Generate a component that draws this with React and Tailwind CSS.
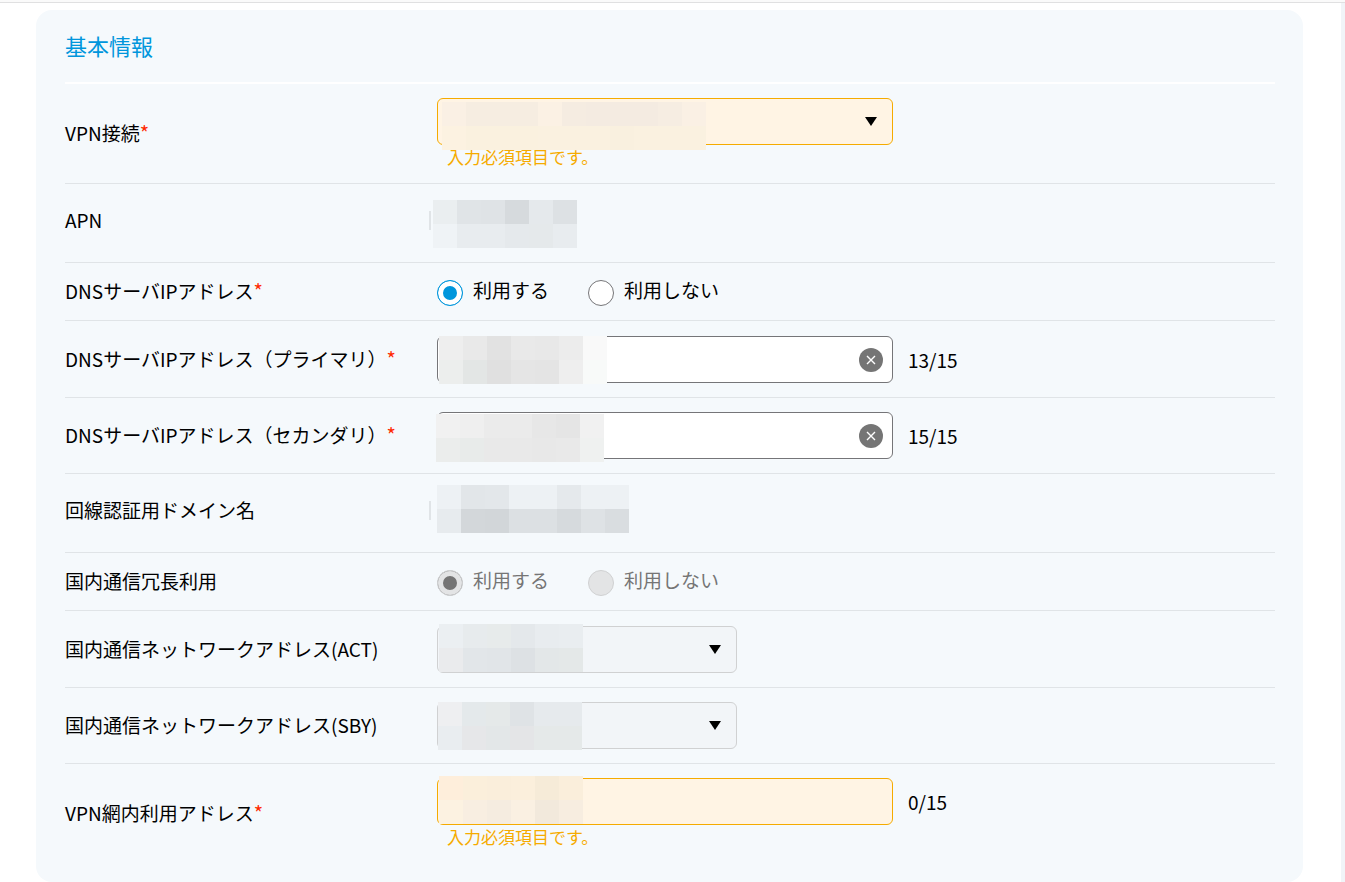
import React from 'react'
import clsx from 'clsx'

const CELL = 24

const MASKS = {
  vpn: [
    ['#faf0e4', '#f6ede1', '#f6ede1', '#f6ede1', '#fbf1e4', '#f5ece1', '#f4ebe1', '#f4ebe1', '#f4ebe1', '#f6ede2', '#faf0e4'],
    ['#fcf2e1', '#faf1df', '#faf1df', '#faf1df', '#faf1e0', '#faf1e0', '#faf1e0', '#f9f0df', '#faf1e0', '#faf1e0', '#faf1e0'],
  ],
  apn: [
    ['#eaeef0', '#e0e4e7', '#dfe3e6', '#d6dadd', '#e5e9ec', '#dde1e4'],
    ['#eff3f6', '#e8ecef', '#e8ecef', '#e5e9ec', '#e5e9eb', '#e8ecef'],
  ],
  primary: [
    ['#eeeeee', '#e9e9e9', '#e2e2e2', '#e9e9e9', '#e8e8e8', '#ececec', '#f9f9f9'],
    ['#eceeed', '#e3e6e5', '#e0e0e0', '#e5e5e5', '#e4e4e4', '#eeeeee', '#f8faf9'],
  ],
  secondary: [
    ['#f1f1f1', '#efefef', '#ebebeb', '#ebebeb', '#e7e7e7', '#e5e5e5', '#f1f1f1'],
    ['#ebedec', '#e8ebea', '#e9e9e9', '#e9e9e9', '#e8e8e8', '#e9e9e9', '#eff1f0'],
  ],
  domain: [
    ['#edf1f4', '#e2e6e9', '#e3e7ea', '#edf1f4', '#edf1f4', '#e5e9ec', '#edf1f4', '#edf1f4'],
    ['#e7ebee', '#d3d7da', '#d2d6d9', '#dce0e3', '#dce0e3', '#d6dadd', '#dee2e5', '#d9dde0'],
  ],
  act: [
    ['#ebeff2', '#e7ebed', '#e7ebeb', '#e4e8eb', '#e8ecef', '#e9edf0'],
    ['#eaebed', '#e2e6e9', '#e1e5e8', '#dde1e4', '#e3e7e8', '#e4e8e8'],
  ],
  sby: [
    ['#eeeff1', '#e4e9eb', '#e5e9e9', '#dfe3e6', '#e6eaed', '#e6eaed'],
    ['#e9edf0', '#e6e7e9', '#e3e7e8', '#e4e5e7', '#e5e9e9', '#e5e9e9'],
  ],
  address: [
    ['#feeedb', '#fbefdb', '#faeedb', '#fbefdc', '#f6ebd8', '#faeedb'],
    ['#fcf2e1', '#f8eee1', '#f5ece0', '#faf0e2', '#f2e9dc', '#f7ede0'],
  ],
}

// Pixelated cover for confidential values
function Mask({ name, className }) {
  const rows = MASKS[name]
  const width = rows[0].length * CELL
  const height = rows.length * CELL
  return (
    <svg
      aria-hidden="true"
      className={clsx('pointer-events-none absolute max-w-none', className)}
      width={width}
      height={height}
      shapeRendering="crispEdges"
    >
      {rows.map((row, y) =>
        row.map((fill, x) => (
          <rect key={`${x}-${y}`} x={x * CELL} y={y * CELL} width={CELL} height={CELL} fill={fill} />
        ))
      )}
    </svg>
  )
}

function Label({ htmlFor, id, required, children }) {
  const Tag = htmlFor ? 'label' : 'span'
  return (
    <Tag htmlFor={htmlFor} id={id} className="w-[372px] shrink-0 pb-0.5">
      {children}
      {required && <span className="text-xl leading-none text-[#ff2a00]">*</span>}
    </Tag>
  )
}

function Row({ last, className, children }) {
  return (
    <div className={clsx('flex items-center', !last && 'border-b border-[#e0e4e7]', className)}>
      {children}
    </div>
  )
}

function SelectBox({ id, error, disabled, className, children }) {
  return (
    <div className={clsx('relative max-w-full', className)}>
      <select
        id={id}
        disabled={disabled}
        aria-invalid={error || undefined}
        className={clsx(
          'block h-[47px] w-full appearance-none rounded-md border px-3 pr-10 outline-none',
          error && 'border-[#f5ab00] bg-[#fff4e4]',
          disabled && 'border-[#d0d1d2] bg-[#f2f5f8] opacity-100'
        )}
      >
        <option value="" />
      </select>
      <svg className="pointer-events-none absolute top-[19px] right-4" width="12" height="9" viewBox="0 0 12 9">
        <path d="M0 0h12L6 9z" fill="#000" />
      </svg>
      {children}
    </div>
  )
}

function TextBox({ id, error, clearable, children }) {
  return (
    <div className="relative w-[456px] max-w-full">
      <input
        id={id}
        type="text"
        aria-invalid={error || undefined}
        className={clsx(
          'block h-[47px] w-full rounded-md border px-3 pr-12 outline-none',
          error ? 'border-[#f5ab00] bg-[#fff4e4]' : 'border-[#757578] bg-white'
        )}
      />
      {clearable && (
        <button
          type="button"
          aria-label="クリア"
          className="absolute top-[12px] right-[10px] flex size-6 items-center justify-center rounded-full bg-[#757575]"
        >
          <svg width="10" height="10" viewBox="0 0 10 10" stroke="#fff" strokeWidth="1.4">
            <path d="M1 1l8 8M9 1L1 9" />
          </svg>
        </button>
      )}
      {children}
    </div>
  )
}

function RadioGroup({ name, labelledBy, disabled }) {
  const options = ['利用する', '利用しない']
  return (
    <div role="radiogroup" aria-labelledby={labelledBy} className="flex gap-[39px]">
      {options.map((text, i) => (
        <label key={text} className={clsx('flex items-center gap-[10px]', disabled && 'text-[#757575]')}>
          <input
            type="radio"
            name={name}
            defaultChecked={i === 0}
            disabled={disabled}
            className="mt-[3px] size-[26px] shrink-0 appearance-none rounded-full border border-[#757578] bg-white checked:border-[#0096dc] checked:bg-[#0096dc] checked:shadow-[inset_0_0_0_5px_#fff] disabled:border-[#d0d1d2] disabled:bg-[#e3e4e5] disabled:checked:border-[#d0d1d2] disabled:checked:bg-[#757575] disabled:checked:shadow-[inset_0_0_0_5px_#e3e4e5]"
          />
          <span className="pb-1 leading-6">{text}</span>
        </label>
      ))}
    </div>
  )
}

function ErrorText() {
  return <p className="pb-0.5 pl-[10px] text-[17px] leading-[23px] text-[#f5ab00]">入力必須項目です。</p>
}

export default function App() {
  return (
    <div className="flex min-h-screen flex-col bg-white font-['Noto_Sans_CJK_JP',sans-serif] text-[19px] leading-7 text-black">
      {/* Header edge */}
      <div className="h-[3px] border-b border-[#e0e0e1] bg-[#fafafa]" />

      <main className="grow border-r-4 border-[#f1f4f8] pt-[7px] pr-[38px] pl-9">
        <section className="rounded-2xl bg-[#f5f9fc] pt-[19px] pr-7 pb-[19px] pl-[29px]">
          <h2 className="border-b-2 border-white pb-[21px] text-[22px] leading-8 text-[#0096dc]">基本情報</h2>

          <form>
            <Row className="pt-[14px] pb-[13px]">
              <Label htmlFor="vpn" required>VPN接続</Label>
              <div>
                <SelectBox id="vpn" error className="w-[456px]">
                  <Mask name="vpn" className="top-1 left-[5px] z-10" />
                </SelectBox>
                <ErrorText />
              </div>
            </Row>

            <Row className="pt-[22px] pb-[26px]">
              <Label>APN</Label>
              <div className="relative mb-0.5 -ml-2 h-[19px] border-l-2 border-[#e0e4e7]">
                <Mask name="apn" className="-top-[11px] left-[2px]" />
              </div>
            </Row>

            <Row className="h-[58px]">
              <Label id="dns-use" required>DNSサーバIPアドレス</Label>
              <RadioGroup name="dns" labelledBy="dns-use" />
            </Row>

            {/* DNS servers */}
            <Row className="pt-[15px] pb-[14px]">
              <Label htmlFor="dns-primary" required>DNSサーバIPアドレス（プライマリ）</Label>
              <TextBox id="dns-primary" clearable>
                <Mask name="primary" className="top-0 left-[2px]" />
              </TextBox>
              <span className="ml-[15px]">13/15</span>
            </Row>

            <Row className="py-[14px]">
              <Label htmlFor="dns-secondary" required>DNSサーバIPアドレス（セカンダリ）</Label>
              <TextBox id="dns-secondary" clearable>
                <Mask name="secondary" className="top-[2px] -left-px" />
              </TextBox>
              <span className="ml-[15px]">15/15</span>
            </Row>

            <Row className="pt-[22px] pb-[26px]">
              <Label>回線認証用ドメイン名</Label>
              <div className="relative mb-0.5 -ml-2 h-[19px] border-l-2 border-[#e0e4e7]">
                <Mask name="domain" className="-top-4 left-[6px]" />
              </div>
            </Row>

            {/* Domestic network */}
            <Row className="h-[58px]">
              <Label id="redundancy">国内通信冗長利用</Label>
              <RadioGroup name="redundancy" labelledBy="redundancy" disabled />
            </Row>

            <Row className="pt-[15px] pb-[14px]">
              <Label htmlFor="net-act">国内通信ネットワークアドレス(ACT)</Label>
              <SelectBox id="net-act" disabled className="w-[300px]">
                <Mask name="act" className="-top-[2px] left-[2px]" />
              </SelectBox>
            </Row>

            <Row className="py-[14px]">
              <Label htmlFor="net-sby">国内通信ネットワークアドレス(SBY)</Label>
              <SelectBox id="net-sby" disabled className="w-[300px]">
                <Mask name="sby" className="top-0 left-px" />
              </SelectBox>
            </Row>

            <Row last className="pt-[14px] pb-[13px]">
              <Label htmlFor="vpn-address" required>VPN網内利用アドレス</Label>
              <div>
                <div className="flex items-center">
                  <TextBox id="vpn-address" error>
                    <Mask name="address" className="-top-[2px] left-[2px]" />
                  </TextBox>
                  <span className="ml-[15px]">0/15</span>
                </div>
                <ErrorText />
              </div>
            </Row>
          </form>
        </section>
      </main>
    </div>
  )
}
